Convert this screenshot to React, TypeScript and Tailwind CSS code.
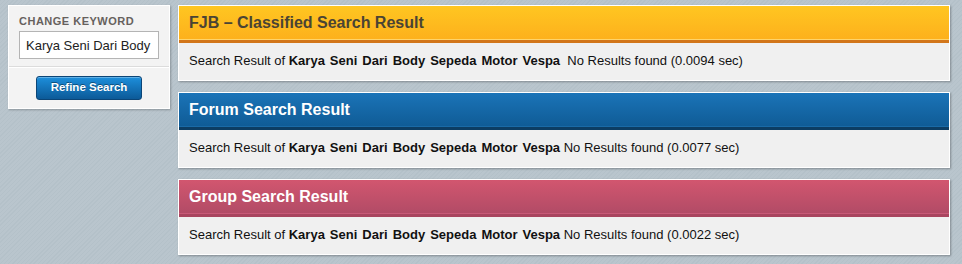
const results = [
  {
    title: 'FJB \u2013 Classified Search Result',
    time: '0.0094',
    gap: true,
    header:
      'bg-gradient-to-b from-[#ffc621] to-[#fdb01c] text-[#4a4434] border-b-[3px] border-[#d2761a] shadow-[inset_0_-1px_0_#ffd46a]',
  },
  {
    title: 'Forum Search Result',
    time: '0.0077',
    gap: false,
    header:
      'bg-gradient-to-b from-[#1b74b8] to-[#0f5b95] text-white border-b-[3px] border-[#0c3d63] shadow-[inset_0_-1px_0_#1a6aa6]',
  },
  {
    title: 'Group Search Result',
    time: '0.0022',
    gap: false,
    header:
      'bg-gradient-to-b from-[#d2566f] to-[#b14b66] text-white border-b-[3px] border-[#a9455f] shadow-[inset_0_-1px_0_#c85a78]',
  },
];

function Sidebar() {
  return (
    <div className="w-[162px] h-[104px] shrink-0 border border-white bg-[#f3f3f3] shadow-[1px_1px_2px_rgba(0,0,0,0.25)]">
      <div className="px-[10px] pt-[9px] pb-[7px] border-b border-[#dcdcdc]">
        <div className="text-[11px] font-bold tracking-[0.5px] leading-[12px] text-[#66615d]">CHANGE KEYWORD</div>
        <input
          readOnly
          value="Karya Seni Dari Body Sepeda Motor Vespa"
          className="mt-[4px] w-[140px] h-[28px] border border-[#b4b4b4] bg-white px-[6px] text-[13px] text-[#222] outline-none"
        />
      </div>
      <div className="border-t border-white flex justify-center pt-[8px]">
        <button className="w-[106px] h-[24px] rounded-[3px] border border-[#0b4577] bg-gradient-to-b from-[#1d8fdc] to-[#0c5a98] text-[11.5px] font-bold text-white [text-shadow:0_-1px_0_rgba(0,0,0,0.4)] shadow-[inset_0_1px_0_rgba(255,255,255,0.3)]">
          Refine Search
        </button>
      </div>
    </div>
  );
}

export default function App() {
  return (
    <div className="w-[962px] h-[264px] font-['Liberation_Sans',Arial,sans-serif] bg-[#b6c3cb] bg-[repeating-linear-gradient(135deg,#b4c1c9_0px,#b4c1c9_1px,#b9c5cd_1px,#b9c5cd_3px)] flex gap-[8px] pl-[8px] pt-[5px]">
      <Sidebar />
      <div className="w-[772px] flex flex-col gap-[11px]">
        {results.map((r) => (
          <div
            key={r.title}
            className="h-[76px] border border-white bg-[#f0f0f0] shadow-[1px_1px_2px_rgba(0,0,0,0.3)] flex flex-col"
          >
            <div className={`h-[37px] shrink-0 px-[10px] flex items-center text-[16px] font-bold ${r.header}`}>
              {r.title}
            </div>
            <div className="flex-1 flex items-center px-[10px] pb-[2px] text-[13px] text-[#111]">
              <span className="whitespace-pre">
                Search Result of <b className="font-bold [word-spacing:1.4px]">Karya Seni Dari Body Sepeda Motor Vespa</b>
                {r.gap ? '  ' : ' '}No Results found ({r.time} sec)
              </span>
            </div>
          </div>
        ))}
      </div>
    </div>
  );
}
